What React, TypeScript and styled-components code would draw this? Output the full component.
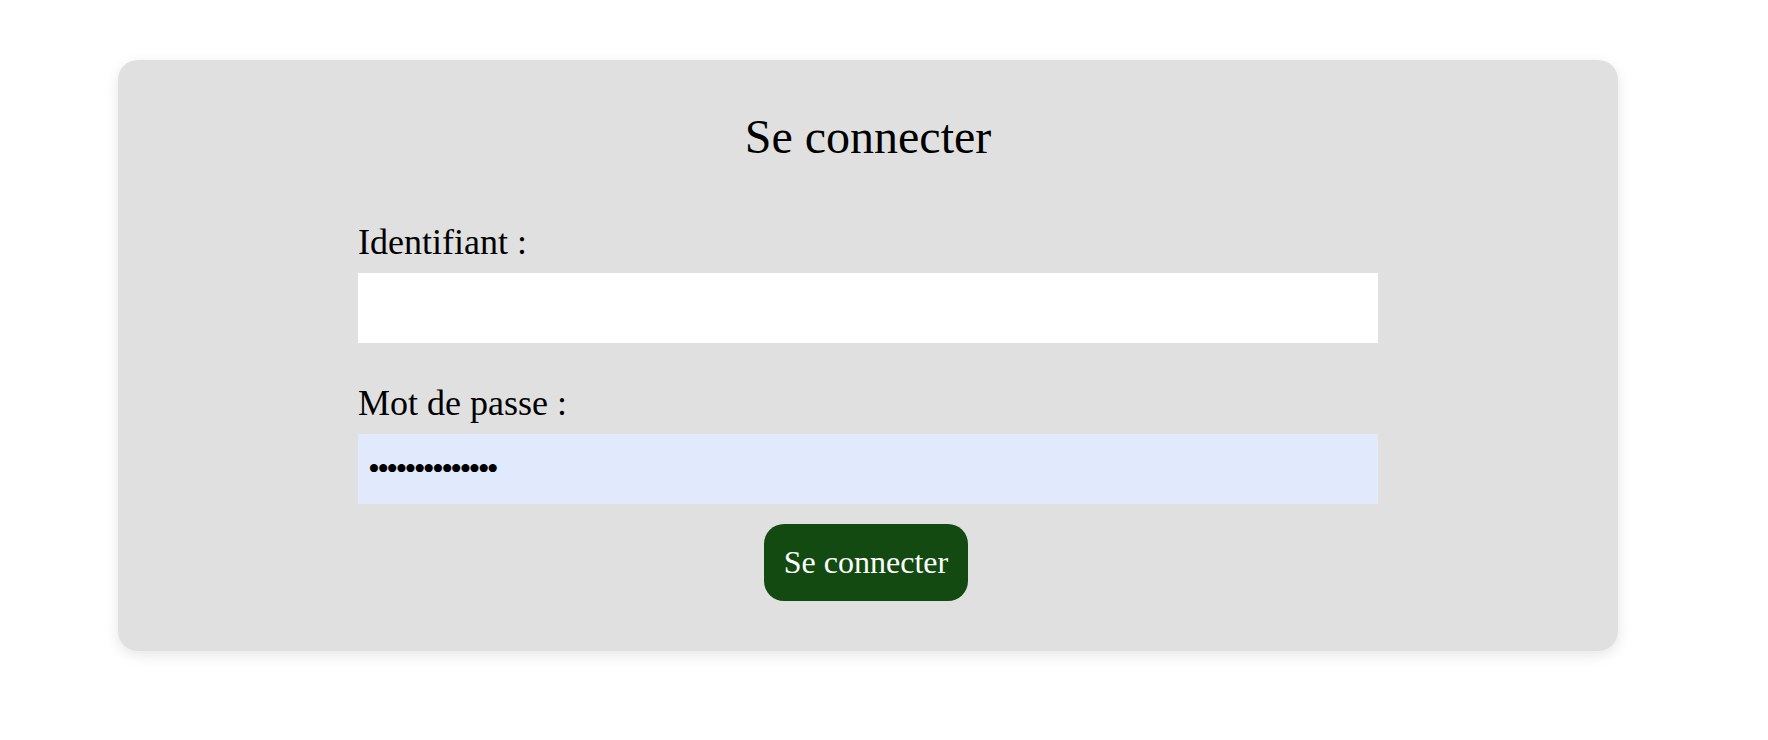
import React from "react";
import styled, { createGlobalStyle } from "styled-components";

const GlobalStyle = createGlobalStyle`
  html, body {
    margin: 0;
    padding: 0;
    background: #ffffff;
    font-family: "Liberation Serif", "Times New Roman", serif;
    color: #000000;
  }
`;

const Page = styled.div`
  padding: 60px 0 40px 118px;
`;

const Card = styled.section`
  box-sizing: border-box;
  width: 1500px;
  padding: 50px 0;
  background: #e0e0e0;
  border-radius: 20px;
  box-shadow: 0 4px 14px rgba(0, 0, 0, 0.1);
  display: flex;
  flex-direction: column;
  align-items: center;
`;

const Title = styled.h1`
  margin: 0 0 59px;
  font-size: 48px;
  line-height: 53px;
  font-weight: 400;
  text-align: center;
`;

const Form = styled.form`
  width: 1020px;
  display: flex;
  flex-direction: column;
`;

const Field = styled.div<{ $last?: boolean }>`
  display: flex;
  flex-direction: column;
  gap: 11px;
  margin-bottom: ${(p) => (p.$last ? "20px" : "40px")};
`;

const Label = styled.label`
  font-size: 36px;
  line-height: 40px;
`;

const Input = styled.input<{ $filled?: boolean }>`
  box-sizing: border-box;
  width: 100%;
  height: 70px;
  margin: 0;
  padding: 0 10px;
  border: none;
  outline: none;
  background: ${(p) => (p.$filled ? "#e0eafc" : "#ffffff")};
  font-family: "Liberation Serif", "Times New Roman", serif;
  font-size: 26px;
  color: #000000;

  &[type="password"] {
    font-size: 34px;
    letter-spacing: -2.76px;
  }
`;

const Button = styled.button`
  align-self: center;
  margin: 0 4px 0 0;
  padding: 20px 20px;
  border: none;
  border-radius: 20px;
  background: #134a11;
  color: #ffffff;
  font-family: "Liberation Serif", "Times New Roman", serif;
  font-size: 32px;
  line-height: 37px;
  cursor: pointer;
`;

export default function App() {
  return (
    <>
      <GlobalStyle />
      <Page>
        <Card>
          <Title>Se connecter</Title>
          <Form onSubmit={(e) => e.preventDefault()}>
            <Field>
              <Label htmlFor="login">Identifiant :</Label>
              <Input id="login" type="text" />
            </Field>
            <Field $last>
              <Label htmlFor="password">Mot de passe :</Label>
              <Input
                id="password"
                type="password"
                $filled
                defaultValue="motdepasse1234"
              />
            </Field>
            <Button type="submit">Se connecter</Button>
          </Form>
        </Card>
      </Page>
    </>
  );
}
